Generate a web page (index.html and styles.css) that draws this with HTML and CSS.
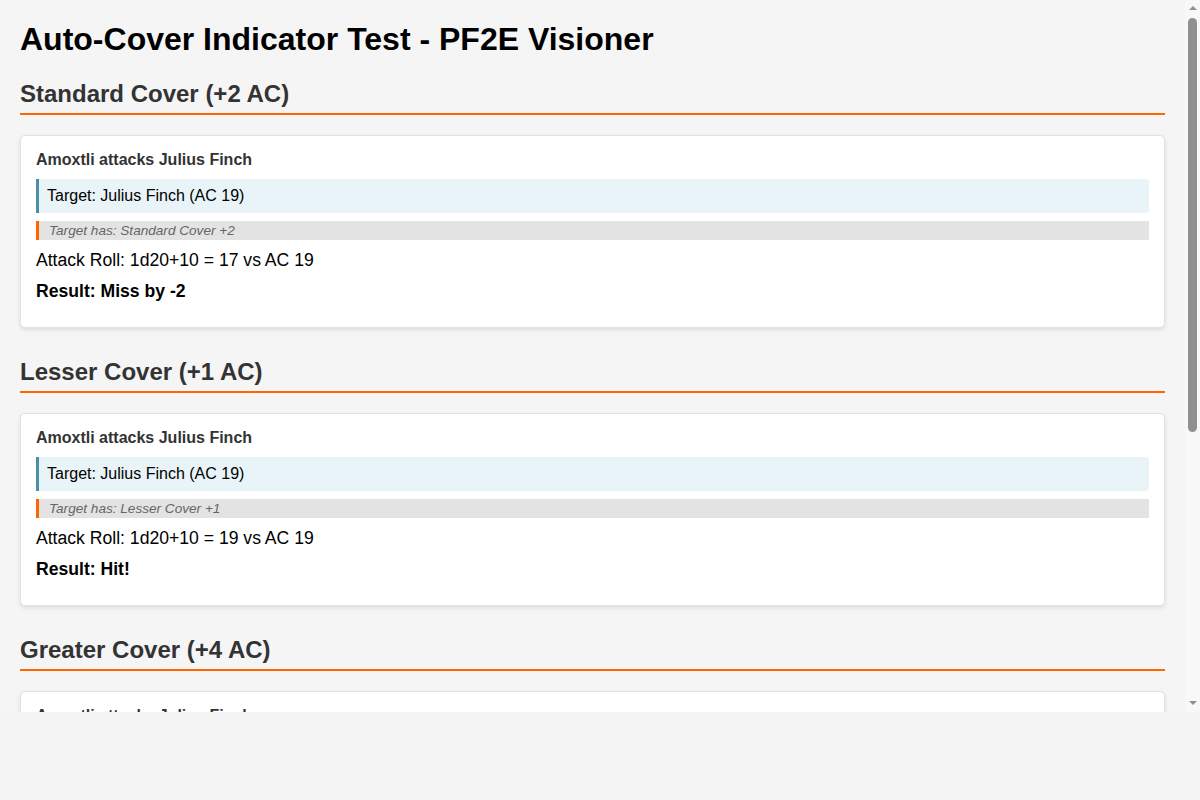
FILE: index.html
```html
<!DOCTYPE html>
<html lang="en">
<head>
<meta charset="utf-8">
<title>Auto-Cover Indicator Test - PF2E Visioner</title>
<link rel="stylesheet" href="styles.css">
</head>
<body>
<div class="viewport">
  <div class="content">
    <div class="page">
      <h1 class="page-title">Auto-Cover Indicator Test - PF2E Visioner</h1>

      <section class="section">
        <h2 class="section-title">Standard Cover (+2 AC)</h2>
        <div class="card">
          <div class="card-title">Amoxtli attacks Julius Finch</div>
          <div class="target">Target: Julius Finch (AC 19)</div>
          <div class="cover-tag">Target has: Standard Cover +2</div>
          <div class="roll">Attack Roll: 1d20+10 = 17 vs AC 19</div>
          <div class="result">Result: Miss by -2</div>
        </div>
      </section>

      <section class="section">
        <h2 class="section-title">Lesser Cover (+1 AC)</h2>
        <div class="card">
          <div class="card-title">Amoxtli attacks Julius Finch</div>
          <div class="target">Target: Julius Finch (AC 19)</div>
          <div class="cover-tag">Target has: Lesser Cover +1</div>
          <div class="roll">Attack Roll: 1d20+10 = 19 vs AC 19</div>
          <div class="result">Result: Hit!</div>
        </div>
      </section>

      <section class="section">
        <h2 class="section-title">Greater Cover (+4 AC)</h2>
        <div class="card">
          <div class="card-title">Amoxtli attacks Julius Finch</div>
          <div class="target">Target: Julius Finch (AC 19)</div>
          <div class="cover-tag">Target has: Greater Cover +4</div>
          <div class="roll">Attack Roll: 1d20+10 = 21 vs AC 19</div>
          <div class="result">Result: Miss by -2</div>
        </div>
      </section>
    </div>
  </div>
  <div class="scrollbar" aria-hidden="true">
    <span class="arrow-up"></span>
    <span class="thumb"></span>
    <span class="track-fill"></span>
    <span class="arrow-down"></span>
  </div>
</div>
</body>
</html>
```

FILE: styles.css
```css
html, body {
  margin: 0;
  padding: 0;
  background: #f3f3f3;
}

body {
  font-family: "Liberation Sans", Arial, sans-serif;
  font-size: 16px;
  color: #000;
}

.viewport {
  display: flex;
  height: 712px;
  background: #f5f5f5;
}

.content {
  flex: 1;
  min-width: 0;
  overflow: hidden;
}

.page {
  padding: 21px 20px 20px 20px;
}

.page-title {
  font-size: 32px;
  font-weight: bold;
  margin: 0 0 22px 0;
  color: #000;
}

.section-title {
  font-size: 24px;
  font-weight: bold;
  color: #333;
  margin: 0 0 20px 0;
  padding-bottom: 5px;
  border-bottom: 2px solid #ff6600;
}

.section {
  margin-bottom: 30px;
}

.card {
  background: #fff;
  border: 1px solid #e2e2e2;
  border-radius: 5px;
  box-shadow: 0 2px 4px rgba(0, 0, 0, 0.1);
  padding: 15px;
}

.card-title {
  font-weight: bold;
  color: #333;
  margin-bottom: 10px;
}

.target {
  background: #e8f4f8;
  border-left: 3px solid #4a90a4;
  border-radius: 0 3px 3px 0;
  padding: 8px;
  margin-bottom: 8px;
}

.cover-tag {
  background: #e3e3e3;
  border-left: 3px solid #ff6600;
  padding: 2px 10px;
  font-size: 13.6px;
  font-style: italic;
  color: #666;
  margin-bottom: 10px;
}

.roll {
  font-size: 17.6px;
  margin-bottom: 10px;
}

.result {
  font-size: 17.6px;
  font-weight: bold;
  margin-bottom: 10px;
}

/* scrollbar drawn as a flow column */
.scrollbar {
  width: 15px;
  flex: 0 0 15px;
  background: #f8f8f8;
  display: flex;
  flex-direction: column;
  align-items: center;
}

.arrow-up {
  margin-top: 6px;
  width: 0;
  height: 0;
  border-left: 4.5px solid transparent;
  border-right: 4.5px solid transparent;
  border-bottom: 4px solid #8f8f8f;
}

.thumb {
  margin-top: 8px;
  width: 9px;
  height: 414px;
  border-radius: 4.5px;
  background: #8f8f8f;
}

.track-fill {
  flex: 1;
}

.arrow-down {
  margin-bottom: 7px;
  width: 0;
  height: 0;
  border-left: 4.5px solid transparent;
  border-right: 4.5px solid transparent;
  border-top: 4px solid #8f8f8f;
}
```
